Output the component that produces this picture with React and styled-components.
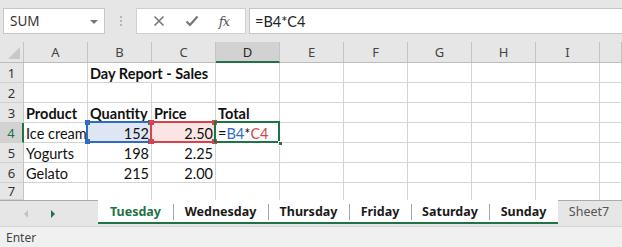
import React from "react";
import styled, { createGlobalStyle } from "styled-components";

const Global = createGlobalStyle`
  html, body { margin: 0; padding: 0; background: #fff; }
  body { width: 622px; height: 247px; overflow: hidden; }
  * { box-sizing: border-box; }
`;

const UI = `"Noto Sans", "Open Sans", sans-serif`;
const CELL = `Lato, "Noto Sans", sans-serif`;

const Window = styled.div`
  width: 622px;
  height: 247px;
  display: flex;
  flex-direction: column;
  background: #e6e6e6;
  overflow: hidden;
`;

const FormulaBar = styled.div`
  height: 42px;
  display: flex;
  align-items: flex-start;
  padding: 8px 0 0 3px;
  background: #e6e6e6;
`;

const NameBox = styled.div`
  width: 102px;
  height: 26px;
  background: #fff;
  border: 1px solid #c6c6c6;
  display: flex;
  align-items: center;
  justify-content: space-between;
  padding: 0 6px 0 6px;
  font-family: ${UI};
  font-size: 13.5px;
  color: #333;
`;

const Caret = styled.span`
  width: 0;
  height: 0;
  border-left: 4px solid transparent;
  border-right: 4px solid transparent;
  border-top: 4px solid #777;
  margin-top: 1px;
`;

const Grip = styled.div`
  width: 31px;
  height: 26px;
  display: flex;
  flex-direction: column;
  align-items: center;
  justify-content: center;
  gap: 2px;
  span {
    width: 2px;
    height: 2px;
    background: #b4b4b4;
  }
`;

const IconBox = styled.div`
  width: 110px;
  height: 26px;
  background: #fff;
  border: 1px solid #d0d0d0;
  display: flex;
  align-items: center;
  justify-content: space-around;
  padding: 0 6px;
  margin-right: 3px;
`;

const Fx = styled.span`
  font-family: "DejaVu Serif", "Liberation Serif", serif;
  font-style: italic;
  font-size: 13px;
  color: #555;
  letter-spacing: -1px;
`;

const FormulaInput = styled.div`
  flex: 1;
  height: 26px;
  background: #fff;
  border: 1px solid #c6c6c6;
  border-right: none;
  display: flex;
  align-items: center;
  padding-left: 5px;
  font-family: ${CELL};
  font-size: 14.5px;
  color: #222;
`;

const Grid = styled.div`
  display: grid;
  grid-template-columns: 24px repeat(9, 64px) 22px;
  grid-template-rows: 21px repeat(6, 20px) 17px;
  background: #fff;
`;

const ColHead = styled.div`
  background: ${(p) => (p.$active ? "#d2d2d2" : "#e6e6e6")};
  border-right: 1px solid #c4c4c4;
  border-bottom: ${(p) => (p.$active ? "2px solid #217346" : "1px solid #bcbcbc")};
  display: flex;
  align-items: center;
  justify-content: center;
  font-family: ${UI};
  font-size: 13px;
  color: ${(p) => (p.$active ? "#262626" : "#444")};
  padding-top: ${(p) => (p.$active ? "1px" : "0")};
`;

const Corner = styled.div`
  background: #e6e6e6;
  border-right: 1px solid #c4c4c4;
  border-bottom: 1px solid #bcbcbc;
  position: relative;
  &::after {
    content: "";
    position: absolute;
    right: 3px;
    bottom: 3px;
    width: 0;
    height: 0;
    border-left: 12px solid transparent;
    border-bottom: 12px solid #c8c8c8;
  }
`;

const RowHead = styled.div`
  background: ${(p) => (p.$active ? "#d2d2d2" : "#e6e6e6")};
  border-right: ${(p) => (p.$active ? "2px solid #217346" : "1px solid #c4c4c4")};
  border-bottom: 1px solid #d0d0d0;
  display: flex;
  align-items: center;
  justify-content: center;
  font-family: ${UI};
  font-size: 13px;
  color: ${(p) => (p.$active ? "#217346" : "#333")};
`;

const Cell = styled.div`
  position: relative;
  border-right: ${(p) => (p.$noRight ? "1px solid transparent" : "1px solid #d4d4d4")};
  border-bottom: ${(p) => (p.$last ? "none" : "1px solid #d4d4d4")};
  background: ${(p) => p.$fill || "transparent"};
  display: flex;
  align-items: center;
  justify-content: ${(p) => (p.$right ? "flex-end" : "flex-start")};
  padding: 1px 2px 0 2px;
  font-family: ${CELL};
  font-size: 14.5px;
  font-weight: ${(p) => (p.$bold ? 700 : 400)};
  color: #111;
  white-space: nowrap;
  overflow: visible;
  z-index: ${(p) => (p.$front ? 2 : 1)};
`;

const Frame = styled.div`
  position: absolute;
  left: -2px;
  top: -2px;
  right: -1px;
  bottom: -1px;
  border: 2px solid ${(p) => p.$color};
  pointer-events: none;
`;

const Handle = styled.span`
  position: absolute;
  width: 5px;
  height: 5px;
  background: ${(p) => p.$color};
  ${(p) => (p.$top ? "top: -3px;" : "bottom: -3px;")}
  ${(p) => (p.$left ? "left: -3px;" : "right: -3px;")}
`;

const GreenHandle = styled.span`
  position: absolute;
  right: -4px;
  bottom: -4px;
  width: 5px;
  height: 5px;
  background: #217346;
  border: 1px solid #fff;
`;

const Ref = styled.span`
  color: ${(p) => p.$color};
`;

const TabBar = styled.div`
  height: 26px;
  display: flex;
  background: #e6e6e6;
  border-top: 1px solid #ababab;
`;

const Nav = styled.div`
  width: 98px;
  display: flex;
  align-items: center;
  padding-left: 24px;
  gap: 23px;
`;

const Arrow = styled.span`
  width: 0;
  height: 0;
  border-top: 4px solid transparent;
  border-bottom: 4px solid transparent;
  ${(p) =>
    p.$dir === "left"
      ? `border-right: 4px solid ${p.$color};`
      : `border-left: 4px solid ${p.$color};`}
`;

const Tab = styled.div`
  width: ${(p) => p.$w}px;
  height: 24px;
  margin-top: -1px;
  background: ${(p) => (p.$selected ? "#fff" : "transparent")};
  border-bottom: ${(p) => (p.$selected ? "2px solid #217346" : "2px solid transparent")};
  border-top: ${(p) => (p.$selected ? "1px solid #fff" : "1px solid transparent")};
  display: flex;
  align-items: center;
  justify-content: center;
  font-family: ${UI};
  font-size: 12.5px;
  font-weight: ${(p) => (p.$selected ? 700 : 400)};
  color: ${(p) => (p.$active ? "#217346" : p.$selected ? "#1a1a1a" : "#555")};
  position: relative;
  &::before {
    content: "";
    display: ${(p) => (p.$sep ? "block" : "none")};
    position: absolute;
    left: 0;
    top: 3px;
    bottom: 2px;
    width: 1px;
    background: #a6a6a6;
  }
`;

const StatusBar = styled.div`
  flex: 1;
  background: #f0f0f0;
  border-top: 1px solid #d6d6d6;
  display: flex;
  align-items: center;
  padding-left: 6px;
  font-family: ${UI};
  font-size: 12px;
  color: #444;
`;

const cols = ["A", "B", "C", "D", "E", "F", "G", "H", "I", ""];

const rows = [
  { n: 1, cells: { B: { t: "Day Report - Sales", bold: true, noRight: true, front: true } } },
  { n: 2, cells: {} },
  {
    n: 3,
    cells: {
      A: { t: "Product", bold: true },
      B: { t: "Quantity", bold: true },
      C: { t: "Price", bold: true },
      D: { t: "Total", bold: true },
    },
  },
  {
    n: 4,
    active: true,
    cells: {
      A: { t: "Ice cream" },
      B: { t: "152", right: true, fill: "#dde6f2", frame: "#2e6cc0" },
      C: { t: "2.50", right: true, fill: "#fbe4e4", frame: "#d8434b" },
      D: { formula: true },
    },
  },
  { n: 5, cells: { A: { t: "Yogurts" }, B: { t: "198", right: true }, C: { t: "2.25", right: true } } },
  { n: 6, cells: { A: { t: "Gelato" }, B: { t: "215", right: true }, C: { t: "2.00", right: true } } },
  { n: 7, last: true, cells: {} },
];

const tabs = [
  { name: "Tuesday", w: 75, selected: true, active: true },
  { name: "Wednesday", w: 95, selected: true, sep: true },
  { name: "Thursday", w: 81, selected: true, sep: true },
  { name: "Friday", w: 62, selected: true, sep: true },
  { name: "Saturday", w: 78, selected: true, sep: true },
  { name: "Sunday", w: 69, selected: true, sep: true },
  { name: "Sheet7", w: 62 },
];

function renderCell(col, cell, row) {
  const key = `${row.n}-${col || "J"}`;
  if (!cell) return <Cell key={key} $last={row.last} />;
  if (cell.formula) {
    return (
      <Cell key={key} $front>
        <span>=</span>
        <Ref $color="#2e6cc0">B4</Ref>
        <span>*</span>
        <Ref $color="#d8434b">C4</Ref>
        <Frame $color="#217346" />
        <GreenHandle />
      </Cell>
    );
  }
  return (
    <Cell
      key={key}
      $bold={cell.bold}
      $right={cell.right}
      $fill={cell.fill}
      $noRight={cell.noRight}
      $front={cell.front || cell.frame}
      $last={row.last}
    >
      {cell.t}
      {cell.frame && (
        <Frame $color={cell.frame}>
          <Handle $color={cell.frame} $top $left />
          <Handle $color={cell.frame} $top />
          <Handle $color={cell.frame} $left />
          <Handle $color={cell.frame} />
        </Frame>
      )}
    </Cell>
  );
}

export default function App() {
  return (
    <>
      <Global />
      <Window>
        <FormulaBar>
          <NameBox>
            SUM
            <Caret />
          </NameBox>
          <Grip>
            <span />
            <span />
            <span />
          </Grip>
          <IconBox>
            <svg width="12" height="12" viewBox="0 0 12 12">
              <path d="M1.5 1.5 L10.5 10.5 M10.5 1.5 L1.5 10.5" stroke="#777" strokeWidth="1.6" />
            </svg>
            <svg width="14" height="12" viewBox="0 0 14 12">
              <path d="M1.5 6.5 L5 10 L12.5 1.5" stroke="#777" strokeWidth="2.2" fill="none" />
            </svg>
            <Fx>fx</Fx>
          </IconBox>
          <FormulaInput>=B4*C4</FormulaInput>
        </FormulaBar>
        <Grid>
          <Corner />
          {cols.map((c, i) => (
            <ColHead key={`h${i}`} $active={c === "D"}>
              {c}
            </ColHead>
          ))}
          {rows.map((row) => (
            <React.Fragment key={row.n}>
              <RowHead $active={row.active}>{row.n}</RowHead>
              {cols.map((c) => renderCell(c, row.cells[c], row))}
            </React.Fragment>
          ))}
        </Grid>
        <TabBar>
          <Nav>
            <Arrow $dir="left" $color="#c2c2c2" />
            <Arrow $dir="right" $color="#217346" />
          </Nav>
          {tabs.map((t) => (
            <Tab key={t.name} $w={t.w} $selected={t.selected} $active={t.active} $sep={t.sep}>
              {t.name}
            </Tab>
          ))}
        </TabBar>
        <StatusBar>Enter</StatusBar>
      </Window>
    </>
  );
}
